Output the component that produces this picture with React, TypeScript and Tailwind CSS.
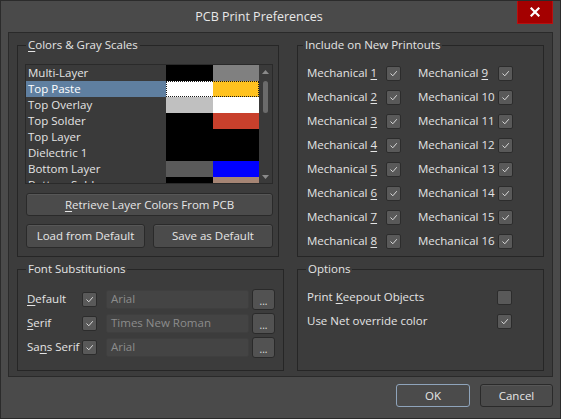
import React from "react";

const FONT = { fontFamily: '"Open Sans", "Noto Sans", sans-serif' };

function Check({ checked = true }: { checked?: boolean }) {
  return (
    <div className="w-[15px] h-[15px] rounded-[2px] bg-[#595959] border border-[#2c2c2c] flex items-center justify-center shrink-0">
      {checked && (
        <svg width="11" height="11" viewBox="0 0 11 11">
          <polyline points="2.5,5.5 4.8,7.8 8.8,3.2" fill="none" stroke="#d8d8d8" strokeWidth="1" />
        </svg>
      )}
    </div>
  );
}

function Group({
  title,
  className,
  legendLeft,
  children,
}: {
  title: React.ReactNode;
  className: string;
  legendLeft: string;
  children: React.ReactNode;
}) {
  return (
    <div className={`relative border border-[#262626] ${className}`}>
      <span className={`absolute top-[-9px] ${legendLeft} px-[2px] leading-4 bg-[#3c3c3c] text-[#e4e4e4] text-[11.5px]`}>
        {title}
      </span>
      {children}
    </div>
  );
}

const layers: [string, string, string][] = [
  ["Multi-Layer", "bg-[#000000]", "bg-[#808080]"],
  ["Top Paste", "bg-[#ffffff]", "bg-[#ffc21f]"],
  ["Top Overlay", "bg-[#c0c0c0]", "bg-[#ffffff]"],
  ["Top Solder", "bg-[#000000]", "bg-[#c8402c]"],
  ["Top Layer", "bg-[#000000]", "bg-[#000000]"],
  ["Dielectric 1", "bg-[#000000]", "bg-[#000000]"],
  ["Bottom Layer", "bg-[#5a5a5a]", "bg-[#0000ff]"],
  ["Bottom Solder", "bg-[#000000]", "bg-[#a68574]"],
];

function Btn({ className, children }: { className: string; children: React.ReactNode }) {
  return (
    <div
      className={`flex items-center justify-center rounded-[3px] bg-[#4b4b4b] border border-[#2a2a2a] text-[#e6e6e6] text-[11.5px] shadow-[inset_0_1px_0_#575757] ${className}`}
    >
      {children}
    </div>
  );
}

function Mech({ n }: { n: number }) {
  return n < 10 ? (
    <>
      Mechanical <span className="underline underline-offset-2">{n}</span>
    </>
  ) : (
    <>Mechanical {n}</>
  );
}

function FontRow({ label, value }: { label: React.ReactNode; value: string }) {
  return (
    <div className="flex items-center h-[24px]">
      <div className="w-[55px] text-[#e4e4e4] text-[11.5px] whitespace-nowrap">{label}</div>
      <Check />
      <div className="ml-[9px] w-[143px] h-[19px] rounded-[2px] bg-[#444444] border border-[#3f3f3f] text-[#8c8c8c] text-[11.5px] flex items-center pl-[4px]">
        {value}
      </div>
      <div className="ml-[3px] w-[23px] h-[21px] rounded-[3px] bg-[#525252] border border-[#2a2a2a] text-[#e0e0e0] text-[10px] flex items-end justify-center pb-[3px] leading-none">
        ...
      </div>
    </div>
  );
}

export default function App() {
  return (
    <div
      style={FONT}
      className="w-[561px] h-[419px] bg-[#4a4a4a] border border-[#2b2b2b] flex flex-col overflow-hidden"
    >
      {/* title bar */}
      <div className="h-[31px] flex shrink-0">
        <div className="flex-1 flex items-center justify-center text-[12.5px] text-[#e8e8e8] pt-[2px]">
          PCB Print Preferences
        </div>
        <div className="mt-[-1px] mr-[7px] w-[36px] h-[24px] bg-[#a40000] border border-[#b81010] flex items-center justify-center">
          <svg width="10" height="10" viewBox="0 0 10 10">
            <path d="M1.5 1.5 L8.5 8.5 M8.5 1.5 L1.5 8.5" stroke="#ffffff" strokeWidth="2.2" strokeLinecap="square" />
          </svg>
        </div>
      </div>

      {/* main panel */}
      <div className="mx-[7px] h-[345px] bg-[#3c3c3c] border border-[#2a2a2a] flex pl-[8px] shrink-0">
        {/* left column */}
        <div className="w-[267px] flex flex-col">
          <Group
            title={
              <>
                <span className="underline underline-offset-2">C</span>olors &amp; Gray Scales
              </>
            }
            legendLeft="left-[8px]"
            className="mt-[12px] w-[262px] h-[212px] pt-[18px] pl-[7px]"
          >
            <div className="w-[248px] h-[120px] border border-[#2a2a2a] bg-[#3a3a3a] flex overflow-hidden">
              <div className="flex-1 flex flex-col">
                {layers.map(([name, c1, c2], i) => (
                  <div key={name} className="h-[16px] flex shrink-0">
                    <div
                      className={`w-[140px] pl-[2px] text-[11.5px] leading-[16px] whitespace-nowrap ${
                        i === 1 ? "bg-[#5f7fa0] text-white" : "text-[#e4e4e4]"
                      }`}
                    >
                      {name}
                    </div>
                    <div className={`flex relative ${i === 1 ? "outline outline-1 outline-dotted outline-[#1a1a1a] -outline-offset-1" : ""}`}>
                      <div className={`w-[47px] h-[16px] ${c1}`} />
                      <div className={`w-[46px] h-[16px] ${c2}`} />
                    </div>
                  </div>
                ))}
              </div>
              <div className="w-[14px] flex flex-col items-center bg-[#3a3a3a]">
                <svg className="mt-[5px]" width="7" height="4" viewBox="0 0 7 4">
                  <polygon points="0,4 3.5,0 7,4" fill="#8a8a8a" />
                </svg>
                <div className="mt-[7px] w-[5px] h-[32px] rounded-[3px] bg-[#6b6b6b]" />
                <div className="flex-1" />
                <svg className="mb-[4px]" width="7" height="4" viewBox="0 0 7 4">
                  <polygon points="0,0 3.5,4 7,0" fill="#8a8a8a" />
                </svg>
              </div>
            </div>
            <Btn className="mt-[9px] ml-[1px] w-[247px] h-[23px]">
              <span>
                <span className="underline underline-offset-2">R</span>etrieve Layer Colors From PCB
              </span>
            </Btn>
            <div className="mt-[8px] flex">
              <Btn className="ml-[1px] w-[119px] h-[24px]">Load from Default</Btn>
              <Btn className="ml-[8px] w-[120px] h-[24px]">Save as Default</Btn>
            </div>
          </Group>

          <Group
            title="Font Substitutions"
            legendLeft="left-[8px]"
            className="mt-[12px] w-[267px] h-[102px] pt-[17px] pl-[9px]"
          >
            <FontRow
              label={
                <>
                  <span className="underline underline-offset-2">D</span>efault
                </>
              }
              value="Arial"
            />
            <FontRow
              label={
                <>
                  <span className="underline underline-offset-2">S</span>erif
                </>
              }
              value="Times New Roman"
            />
            <FontRow
              label={
                <>
                  Sa<span className="underline underline-offset-2">n</span>s Serif
                </>
              }
              value="Arial"
            />
          </Group>
        </div>

        {/* right column */}
        <div className="ml-[13px] w-[247px] flex flex-col">
          <Group
            title="Include on New Printouts"
            legendLeft="left-[5px]"
            className="mt-[12px] h-[212px] pt-[15px] pl-[9px]"
          >
            {[1, 2, 3, 4, 5, 6, 7, 8].map((n) => (
              <div key={n} className="h-[24px] flex items-center text-[11.5px] text-[#e4e4e4]">
                <div className="w-[79px] whitespace-nowrap">
                  <Mech n={n} />
                </div>
                <Check />
                <div className="ml-[17px] w-[80px] whitespace-nowrap">
                  <Mech n={n + 8} />
                </div>
                <Check />
              </div>
            ))}
          </Group>

          <Group
            title="Options"
            legendLeft="left-[8px]"
            className="mt-[12px] h-[102px] pt-[15px] pl-[9px]"
          >
            <div className="h-[24px] flex items-center text-[11.5px] text-[#e4e4e4]">
              <div className="w-[190px] whitespace-nowrap">
                Print <span className="underline underline-offset-2">K</span>eepout Objects
              </div>
              <Check checked={false} />
            </div>
            <div className="h-[24px] flex items-center text-[11.5px] text-[#e4e4e4]">
              <div className="w-[190px] whitespace-nowrap">Use Net override color</div>
              <Check />
            </div>
          </Group>
        </div>
      </div>

      {/* footer */}
      <div className="flex-1 flex justify-end items-start pt-[7px] pr-[7px]">
        <Btn className="w-[74px] h-[23px] border-[#8fa4bb] shadow-none">OK</Btn>
        <Btn className="ml-[10px] w-[73px] h-[23px]">Cancel</Btn>
      </div>
    </div>
  );
}
